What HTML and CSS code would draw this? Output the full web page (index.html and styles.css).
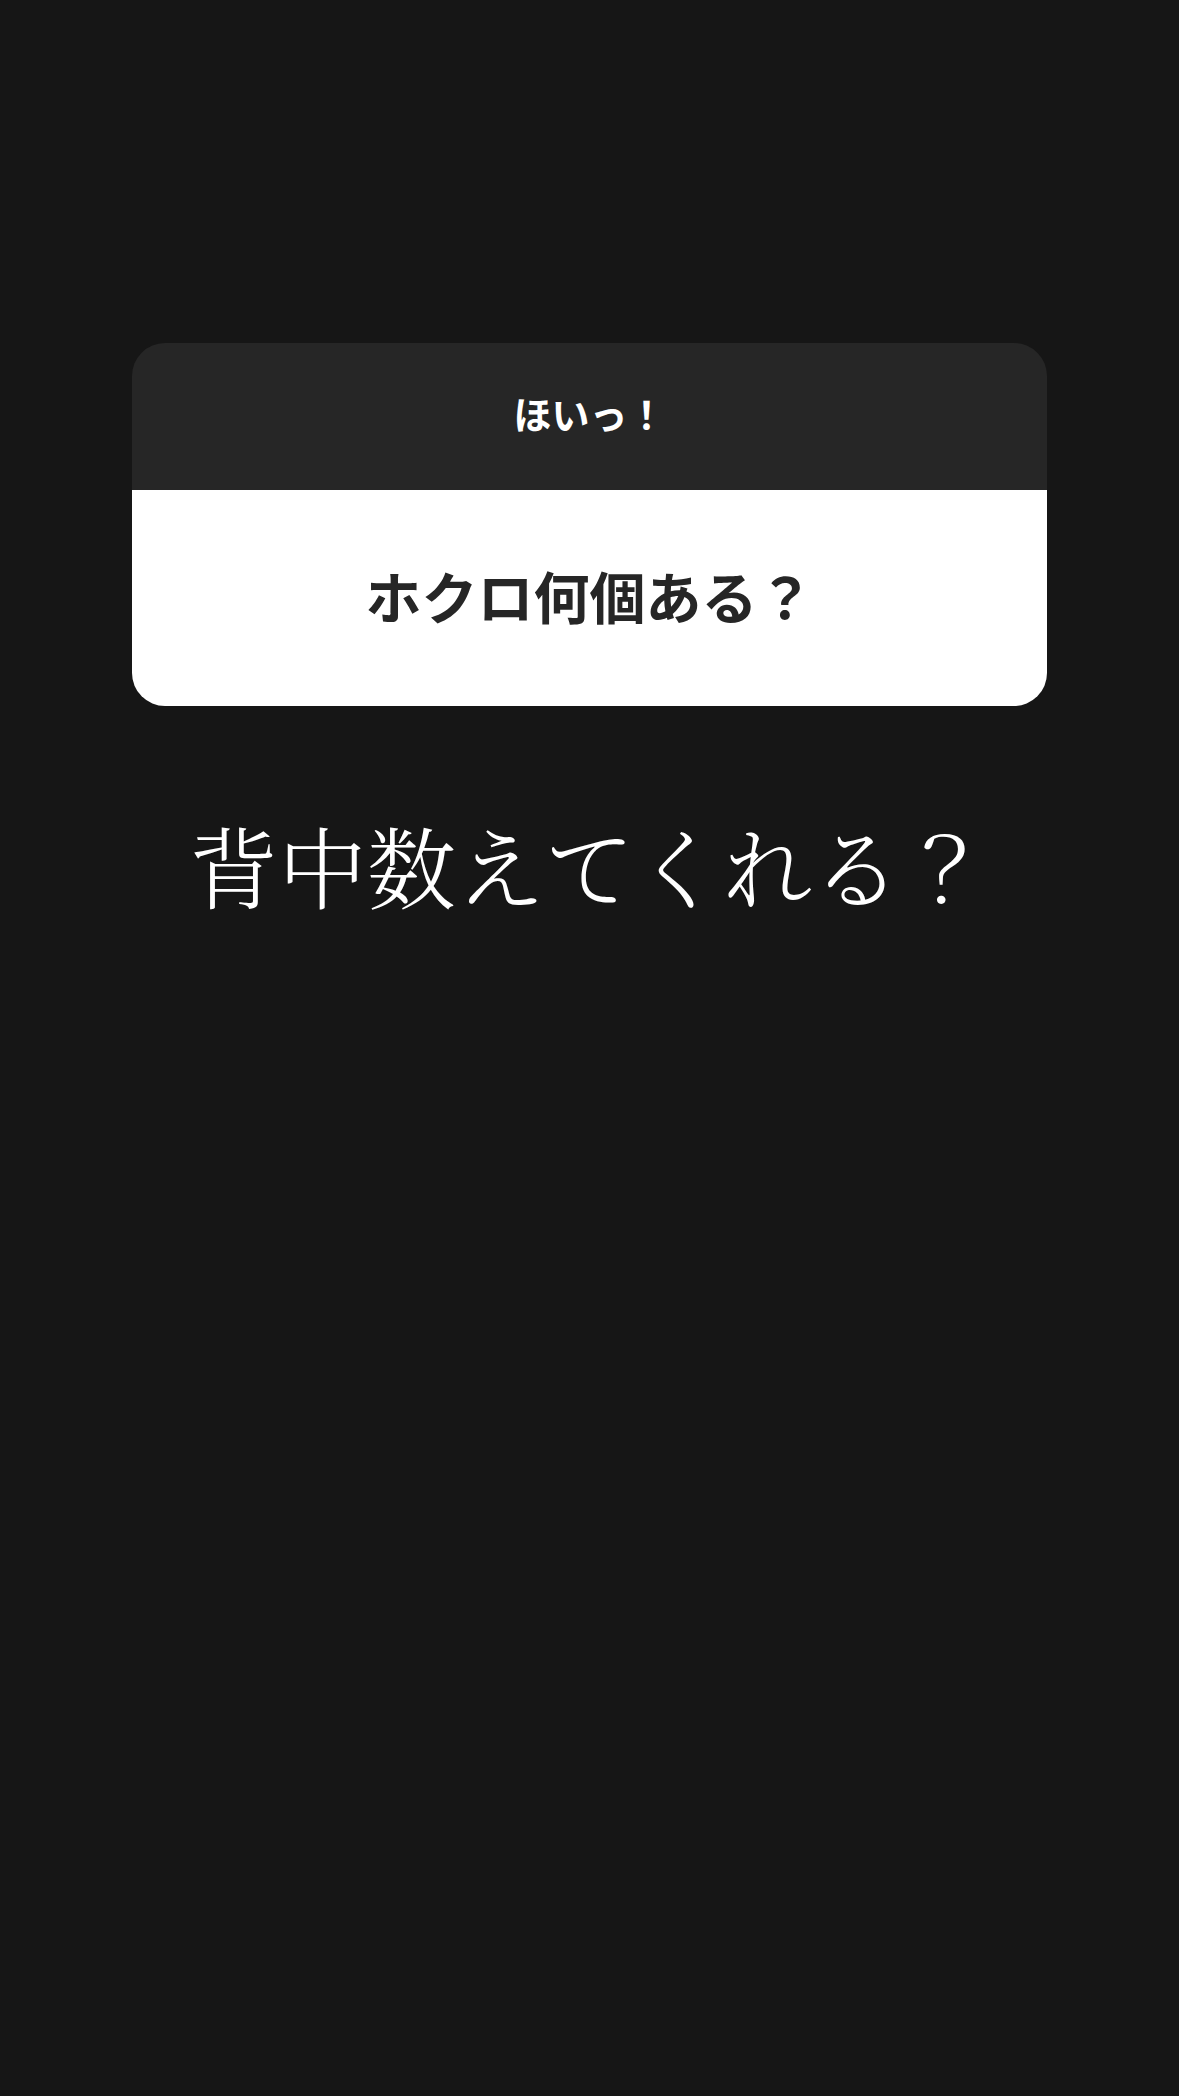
FILE: index.html
```html
<!DOCTYPE html>
<html lang="ja">
<head>
<meta charset="utf-8">
<link rel="stylesheet" href="styles.css">
</head>
<body>
<main class="page">
  <section class="card">
    <div class="card-head">ほいっ！</div>
    <div class="card-body">ホクロ何個ある？</div>
  </section>
  <p class="answer">背中数えてくれる？</p>
</main>
</body>
</html>
```
FILE: styles.css
```css
html, body {
  margin: 0;
  padding: 0;
  background: #161616;
}
.page {
  width: 1179px;
  height: 2096px;
  padding-top: 343px;
  box-sizing: border-box;
  display: flex;
  flex-direction: column;
  align-items: center;
}
.card {
  width: 915px;
  border-radius: 33px;
  overflow: hidden;
  display: flex;
  flex-direction: column;
}
.card-head {
  height: 147px;
  padding-bottom: 8px;
  box-sizing: border-box;
  background: #262626;
  color: #ffffff;
  font-family: "Noto Sans CJK JP", "Noto Sans", sans-serif;
  font-weight: 700;
  font-size: 38px;
  display: flex;
  align-items: center;
  justify-content: center;
}
.card-body {
  height: 216px;
  padding-bottom: 8px;
  box-sizing: border-box;
  background: #ffffff;
  color: #262626;
  font-family: "Noto Sans CJK JP", "Noto Sans", sans-serif;
  font-weight: 700;
  font-size: 56px;
  display: flex;
  align-items: center;
  justify-content: center;
}
.answer {
  margin: 105px 0 0;
  color: #ffffff;
  font-family: "Noto Serif CJK JP", "Liberation Serif", "Noto Sans CJK JP", serif;
  font-weight: 300;
  font-size: 89px;
  line-height: 106px;
  text-align: center;
}
```
